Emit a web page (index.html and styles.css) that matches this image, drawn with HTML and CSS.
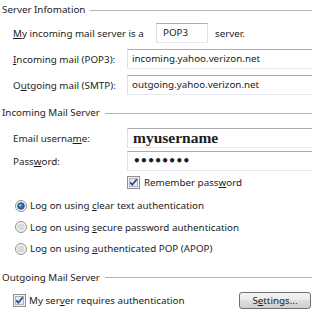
FILE: index.html
```html
<!DOCTYPE html>
<html lang="en">
<head>
    <meta charset="UTF-8">
    <title>Account Properties - Servers</title>
    <link rel="stylesheet" href="styles.css">
</head>
<body>
    <div class="dialog">
        <div class="group-title first"><span>Server Infomation</span></div>

        <div class="row row-type">
            <span class="label-inline"><u>M</u>y incoming mail server is a</span>
            <span class="box box-type">POP3</span>
            <span>server.</span>
        </div>

        <div class="row">
            <label class="label"><u>I</u>ncoming mail (POP3):</label>
            <div class="box box-wide">incoming.yahoo.verizon.net</div>
        </div>

        <div class="row">
            <label class="label">O<u>u</u>tgoing mail (SMTP):</label>
            <div class="box box-wide">outgoing.yahoo.verizon.net</div>
        </div>

        <div class="group-title second"><span>Incoming Mail Server</span></div>

        <div class="row row-user">
            <label class="label">Email userna<u>m</u>e:</label>
            <div class="box box-wide user">myusername</div>
        </div>

        <div class="row row-pass">
            <label class="label">Pass<u>w</u>ord:</label>
            <div class="box box-wide pass">&#8226;&#8226;&#8226;&#8226;&#8226;&#8226;&#8226;&#8226;</div>
        </div>

        <div class="check-row remember">
            <svg class="check" width="13" height="13" viewBox="0 0 13 13">
                <rect x="0.5" y="0.5" width="12" height="12" fill="#f4f4f4" stroke="#8e8f8f"/>
                <rect x="2.5" y="2.5" width="8" height="8" fill="#e6e9ef" stroke="#aeb3b9"/>
                <path d="M3.2 6.4 L5.3 8.7 L9.8 3.2" fill="none" stroke="#2a4d8c" stroke-width="1.8"/>
            </svg>
            <span>Remember pass<u>w</u>ord</span>
        </div>

        <div class="radios">
            <div class="radio-row">
                <svg class="radio" width="12" height="12" viewBox="0 0 12 12">
                    <circle cx="6" cy="6" r="5.5" fill="#f2f2f2" stroke="#949494"/>
                    <circle cx="6" cy="6" r="3.3" fill="#2d6fb3" stroke="#1e3f6e" stroke-width="0.8"/>
                    <circle cx="5.3" cy="5.2" r="1.2" fill="#8fc2ef"/>
                </svg>
                <span>Log on using <u>c</u>lear text authentication</span>
            </div>
            <div class="radio-row">
                <svg class="radio" width="12" height="12" viewBox="0 0 12 12">
                    <circle cx="6" cy="6" r="5.5" fill="#f2f2f2" stroke="#949494"/>
                    <circle cx="6" cy="6" r="3.6" fill="#dadada"/>
                </svg>
                <span>Log on using <u>s</u>ecure password authentication</span>
            </div>
            <div class="radio-row">
                <svg class="radio" width="12" height="12" viewBox="0 0 12 12">
                    <circle cx="6" cy="6" r="5.5" fill="#f2f2f2" stroke="#949494"/>
                    <circle cx="6" cy="6" r="3.6" fill="#dadada"/>
                </svg>
                <span>Log on using <u>a</u>uthenticated POP (APOP)</span>
            </div>
        </div>

        <div class="group-title third"><span>Outgoing Mail Server</span></div>

        <div class="check-row outgoing">
            <svg class="check" width="13" height="13" viewBox="0 0 13 13">
                <rect x="0.5" y="0.5" width="12" height="12" fill="#f4f4f4" stroke="#8e8f8f"/>
                <rect x="2.5" y="2.5" width="8" height="8" fill="#e6e9ef" stroke="#aeb3b9"/>
                <path d="M3.2 6.4 L5.3 8.7 L9.8 3.2" fill="none" stroke="#2a4d8c" stroke-width="1.8"/>
            </svg>
            <span class="grow">My ser<u>v</u>er requires authentication</span>
            <button class="btn">S<u>e</u>ttings...</button>
        </div>
    </div>
</body>
</html>
```

FILE: styles.css
```css
body {
    margin: 0;
    padding: 0;
    background: #fff;
    font-family: 'Noto Sans', 'Open Sans', sans-serif;
    font-size: 9.8px;
    color: #1c1c1c;
    overflow: hidden;
}

u {
    text-underline-offset: 1px;
}

.dialog {
    width: 312px;
    height: 333px;
    overflow: hidden;
}

/* group headers with the rule to the right */
.group-title {
    display: flex;
    align-items: center;
    height: 16px;
    line-height: 16px;
    padding-left: 2px;
}

.group-title::after {
    content: "";
    flex: 1;
    border-top: 1px solid #b4b4b4;
    margin-left: 5px;
}

.group-title.first {
    margin-top: 2px;
}

.group-title.second {
    margin-top: 10px;
}

.group-title.third {
    margin-top: 10px;
}

.row {
    display: flex;
    align-items: center;
    height: 20px;
    margin-top: 6px;
    padding-left: 13px;
    white-space: nowrap;
}

.row-type {
    margin-top: 5px;
}

.label {
    width: 114px;
    flex: none;
}

.label-inline {
    width: 143px;
    flex: none;
}

.box {
    box-sizing: border-box;
    height: 20px;
    line-height: 18px;
    padding-left: 4px;
    border: 1px solid #dcdfe6;
    border-top-color: #abadb3;
    border-bottom-color: #e3e9ef;
    background: #fff;
}

.box-type {
    width: 52px;
    padding-left: 6px;
    margin: 0 7px 0 0;
}

.box-wide {
    width: 200px;
    flex: none;
}

.user {
    padding-left: 5px;
    font-family: 'Liberation Serif', serif;
    font-weight: bold;
    font-size: 15.5px;
    line-height: 18px;
}

.pass {
    padding-left: 5px;
    font-family: 'DejaVu Sans', sans-serif;
    font-weight: bold;
    font-size: 12px;
    letter-spacing: -0.6px;
}

.row-user {
    margin-top: 7px;
}

.row-pass {
    margin-top: 3px;
}

.check-row {
    display: flex;
    align-items: center;
    white-space: nowrap;
}

.check {
    flex: none;
    margin-right: 4px;
}

.remember {
    height: 16px;
    margin-top: 3px;
    padding-left: 127px;
}

.radios {
    margin-top: 5px;
}

.radio-row {
    display: flex;
    align-items: center;
    height: 21.5px;
    padding-left: 15px;
    white-space: nowrap;
}

.radio {
    flex: none;
    margin-right: 3px;
}

.outgoing {
    height: 17px;
    margin-top: 6px;
    padding-left: 13px;
}

.outgoing .check {
    margin-right: 3px;
}

.grow {
    flex: 1;
}

.btn {
    flex: none;
    width: 72px;
    height: 17px;
    margin-right: 1px;
    padding: 0;
    font-family: inherit;
    font-size: 9.8px;
    color: #1c1c1c;
    border: 1px solid #707070;
    border-radius: 3px;
    background: linear-gradient(#f3f3f3 0%, #ebebeb 45%, #dddddd 50%, #cfcfcf 100%);
}
```
